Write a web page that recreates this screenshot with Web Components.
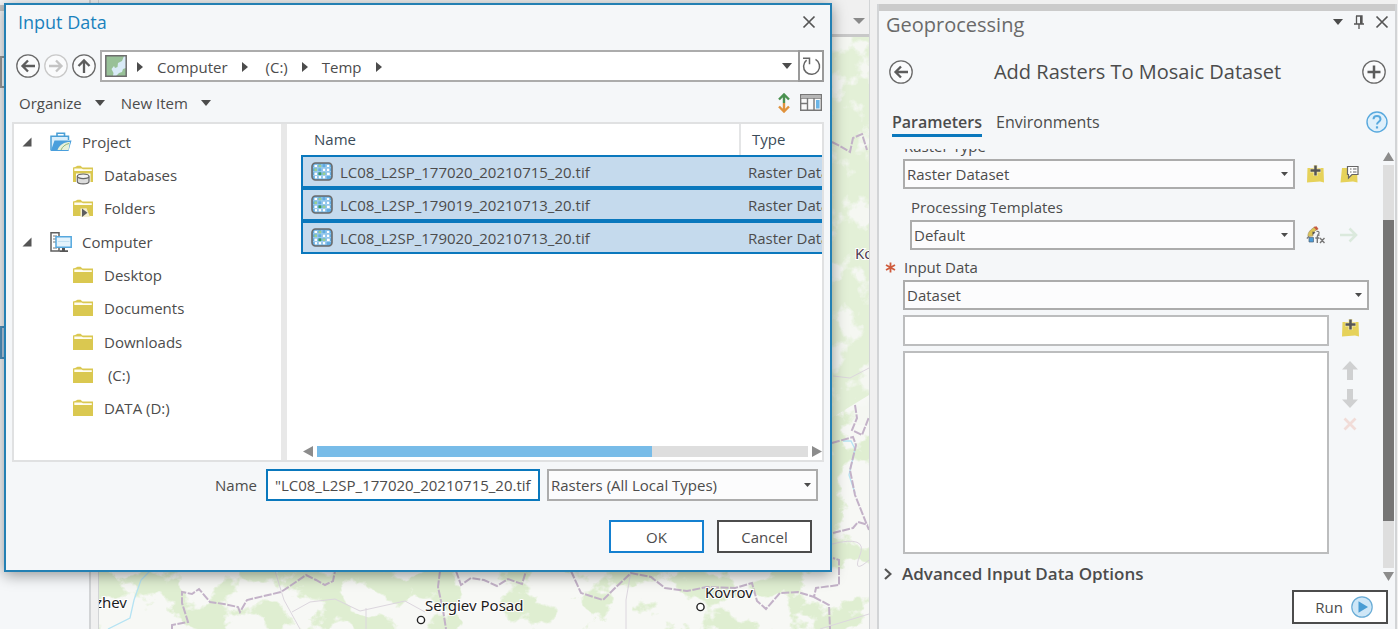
<!DOCTYPE html>
<html lang="en">
<head>
<meta charset="utf-8">
<title>Add Rasters To Mosaic Dataset</title>
<style>
  html, body { height: 100%; }
  body {
    margin: 0; overflow: hidden; background: #f0f0f0; color: #4c4c4c;
    font: 15px/20px "Open Sans", "Noto Sans", sans-serif;
  }
</style>
</head>
<body>
<app-shell></app-shell>

<script>
const ICONS = {
  close: [14, 14, '<path d="M1.500 1.500 12.500 12.500M12.500 1.500 1.500 12.500" stroke="#555" stroke-width="1.700" fill="none"/>'],
  back: [24, 24, '<circle cx="12" cy="12" r="11.200" fill="#fafbfc" stroke="#6a6a6a" stroke-width="1.300"/><path d="M19 12H6.500M12 6.500 6.500 12 12 17.500" fill="none" stroke="#5c5c5c" stroke-width="2.300"/>'],
  forward: [24, 24, '<circle cx="12" cy="12" r="11.200" fill="#fafbfc" stroke="#c9c9c9" stroke-width="1.300"/><path d="M5 12H17.500M12 6.500 17.500 12 12 17.500" fill="none" stroke="#c4c4c4" stroke-width="2.300"/>'],
  up: [24, 24, '<circle cx="12" cy="12" r="11.200" fill="#fafbfc" stroke="#6a6a6a" stroke-width="1.300"/><path d="M12 19V6.500M6.500 12 12 6.500 17.500 12" fill="none" stroke="#5c5c5c" stroke-width="2.300"/>'],
  plus: [24, 24, '<circle cx="12" cy="12" r="11.200" fill="#fafbfc" stroke="#6a6a6a" stroke-width="1.300"/><path d="M5.500 12H18.500M12 5.500V18.500" fill="none" stroke="#5c5c5c" stroke-width="2.500"/>'],
  help: [22, 22, '<circle cx="11" cy="11" r="10" fill="#dff0fb" stroke="#58a9de" stroke-width="1.400"/><path d="M7.500 8.200C7.500 3.800 14.500 3.800 14.500 8.200C14.500 10.800 11 10.700 11 13.600" fill="none" stroke="#58a9de" stroke-width="2"/><path d="M9.900 15.300h2.200v2.200H9.900z" fill="#58a9de"/>'],
  run: [22, 22, '<circle cx="11" cy="11" r="10.200" fill="#cfe7f7" stroke="#69acd6" stroke-width="1.200"/><path d="M7.500 5.200 17 11 7.500 16.800z" fill="#4a9dd4"/>'],
  caret: [10, 6, '<path d="M0 0H10L5 6z" fill="#4c4c4c"/>'],
  caretGrey: [12, 6, '<path d="M0 0H12L6 6z" fill="#8a8a8a"/>'],
  caretSmall: [7, 4, '<path d="M0 0H7L3.500 4z" fill="#4c4c4c"/>'],
  crumb: [6, 10, '<path d="M0 0 6 5 0 10z" fill="#4c4c4c"/>'],
  expanded: [10, 10, '<path d="M9.500 .5V9.500H.5z" fill="#555"/>'],
  chevron: [8, 12, '<path d="M1 1 6.500 6 1 11" fill="none" stroke="#555" stroke-width="2.200"/>'],
  pin: [12, 14, '<path d="M3 1H9V8.500M3.500 1V8.500M1 9H11M6 9V14" fill="none" stroke="#555" stroke-width="1.300"/><path d="M7 1h2v8H7z" fill="#555"/>'],
  refresh: [20, 20, '<path d="M5.600 4.100A8 8 0 1 0 14.500 3.400" fill="none" stroke="#666" stroke-width="1.500"/><path d="M2 2.200H8.500V8.200" fill="none" stroke="#666" stroke-width="1.500"/>'],
  sort: [12, 20, '<path d="M1 6.500 6 1.500 11 6.500M6 2V10" fill="none" stroke="#4a9150" stroke-width="2.400"/><path d="M1 13.500 6 18.500 11 13.500M6 10V18" fill="none" stroke="#e0923c" stroke-width="2.400"/>'],
  details: [22, 17, '<path d="M.7.700H21.300V16.300H.7zM.7 4H21.300M7.500 4V16M14 4V16M.7 9.500H7.500" fill="#fafafa" stroke="#777" stroke-width="1.400"/><path d="M1 1.500H21V4H1z" fill="#b5b5b5"/><path d="M16 6h3.600v8.500H16z" fill="#6cb5e6"/>'],
  mapThumb: [22, 22, '<path d="M1 1H21V21H1z" fill="#d9ebf7"/><path d="M1 1H19L17 6L13 8L12.500 12L10 13L9 11L6.500 14L8.500 18L8 21H1zM21 13V21H11L14 18L17 17L18 14z" fill="#98c198"/><path d="M.8.800H21.200V21.200H.8z" fill="none" stroke="#6d6d6d" stroke-width="1.500"/>'],
  project: [22, 20, '<path d="M7 4V1.200H14.500V4" fill="none" stroke="#4a9fd6" stroke-width="1.600"/><path d="M1 18.500V4.200H18.500V8" fill="#d9eefb" stroke="#4a9fd6" stroke-width="1.500"/><path d="M4.500 8.500H21.500L18.500 19H.8z" fill="#4a9fdc"/><path d="M7.500 18C9.500 12.500 14.500 10 20 10L18.500 18z" fill="#e8f1da"/><path d="M11 18C12.500 14.500 15 12.500 19 11.500" fill="none" stroke="#8fb67c"/>'],
  computer: [22, 20, '<path d="M1 .8H9V19H1z" fill="#fff" stroke="#5f5f5f" stroke-width="1.500"/><path d="M3 4H7M3 7H6M3 10H6M3 16H7" stroke="#777" stroke-width="1.200"/><path d="M6 4.800H21.200V15.200H6z" fill="#e4f3fc" stroke="#56a8de" stroke-width="1.500"/><path d="M8 9.500H19.500" stroke="#c2e0f2"/><path d="M12 16h3v2.200h3V20H9.500v-1.800H12z" fill="#555"/>'],
  folder: [22, 18, '<path d="M1 17V2.600L3.200 2L5.500 .8H8.500L10.500 2.400H21V17z" fill="#dac850"/><path d="M2.300 6V3.400H9.500L11 4.200H19.800V6z" fill="#fffdf2"/>'],
  databases: [22, 20, '<path d="M1 17V2.600L3.200 2L5.500 .8H8.500L10.500 2.400H21V17z" fill="#dac850"/><path d="M2.300 6V3.400H9.500L11 4.200H19.800V6z" fill="#fffdf2"/><path d="M4 8.500H18.500V18H4z" fill="#fff"/><path d="M5.300 11.500V16.500C5.300 19.700 17 19.700 17 16.500V11.500" fill="#dcdcdc" stroke="#666" stroke-width="1.200"/><ellipse cx="11.150" cy="11.300" rx="5.850" ry="2.300" fill="#f3f3f3" stroke="#666" stroke-width="1.200"/>'],
  folders: [22, 18, '<path d="M1 17V2.600L3.200 2L5.500 .8H8.500L10.500 2.400H21V17z" fill="#dac850"/><path d="M2.300 6V3.400H9.500L11 4.200H19.800V6z" fill="#fffdf2"/><path d="M8.500 9.500 14.500 9.200 18 18H8.500z" fill="#f4efd0"/><path d="M10 9.500 15.500 13.700 10 18z" fill="#5e5e5e"/>'],
  raster: [22, 19, '<rect x="1" y="1" width="20" height="17" rx="3.500" fill="#5faae0" stroke="#6b6b6b" stroke-width="1.600"/><path d="M3.400 3.900H6M15.800 3.900h2.600M11.700 7.800h2.600M15.800 7.800h2.600M3.400 11.800H6M15.800 11.800h3M3.800 15.200H6M7.600 15.200h2.600M11.700 15.200h2.600" stroke="#fff" stroke-width="2.400"/><path d="M6.800 2V17M10.900 2V17M15 2V17M2 5.800H20M2 9.700H20M2 13.600H20" stroke="#a9d3f0" stroke-width=".9"/><path d="M7.600 2.700H10.200V5.200H7.600zM3.400 6.600h2.600v2.400H3.400zM11.700 10.600h2.600v2.400h-2.600z" fill="#9bcf8f"/><path d="M7.500 10.400H10.300V13.100H7.500z" fill="#3c9a5b"/>'],
  folderAdd: [19, 18, '<path d="M1.500 3H17.500L18 17.500L14 16.500L1 17.500z" fill="#e6d25a"/><path d="M9.500 0V11M4 5.500H15" stroke="#f3e9b0" stroke-width="4"/><path d="M9.500 .5V10.500M4.500 5.500H14.500" stroke="#555" stroke-width="2.500"/>'],
  folderNote: [19, 18, '<path d="M2 3H17L17.500 17.500L13 16.500L.5 17.500z" fill="#e6d25a"/><path d="M7.500 1.500H18V9.500H12L8.500 13V9.500H7.500z" fill="#fff" stroke="#666" stroke-width="1.200"/><path d="M10 4H11.500M13 4H16.500M10 7H11.500M13 7H16.500" stroke="#666" stroke-width="1.200"/>'],
  editor: [19, 18, '<path d="M2 10.500C1.500 6 5 3.500 8.500 1L11 3.500C8 5 6.500 7.500 7 10z" fill="#dcc455" stroke="#a89868" stroke-width=".7"/><path d="M7.500 1 10.500 .2 12.500 3 10.500 4.200z" fill="#c65a43"/><path d="M6.500 5.500 9.500 6.500 6.500 9z" fill="#555"/><path d="M10.500 5.500C14 4.500 13.500 8.500 11.500 8.500M.8 12.500 3 10.500" fill="none" stroke="#777" stroke-width="1.200"/><path d="M3 11.500H7.500V16H3z" fill="#4a9bd8" stroke="#567" stroke-width=".7"/><path d="M13.500 9.200C11.500 8.700 11.300 10 11.300 12V17M9.300 12H13.300M14 12 18.500 17M18.500 12 14 17" fill="none" stroke="#777" stroke-width="1.400"/>'],
  go: [18, 16, '<path d="M0 8H16M9.500 1.500 16 8 9.500 14.500" fill="none" stroke="#dbe9dd" stroke-width="2.600"/>'],
  moveUp: [16, 19, '<path d="M8 0 16 8.500H11V19H5V8.500H0z" fill="#cfd0d1"/>'],
  moveDown: [16, 19, '<path d="M8 19 16 10.500H11V0H5V10.500H0z" fill="#cfd0d1"/>'],
  remove: [14, 14, '<path d="M1.500 1.500 12.500 12.500M12.500 1.500 1.500 12.500" stroke="#f1dcd8" stroke-width="2.800" fill="none"/>'],
  required: [11, 11, '<path d="M5.500 .5V10.500M1 3 10 8M10 3 1 8" stroke="#cf5b3c" stroke-width="1.800"/>'],
  triUp: [11, 9, '<path d="M5.500 0 11 9H0z" fill="#8c8c8c"/>'],
  triDown: [11, 9, '<path d="M0 0H11L5.500 9z" fill="#8c8c8c"/>'],
  triLeft: [10, 11, '<path d="M10 0V11L0 5.500z" fill="#8c8c8c"/>'],
  triRight: [10, 11, '<path d="M0 0 10 5.500 0 11z" fill="#8c8c8c"/>'],
};

class Base extends HTMLElement {
  connectedCallback() {
    if (this.shadowRoot) return;
    const t = document.createElement('template');
    t.innerHTML = this.view();
    this.attachShadow({ mode: 'open' }).append(t.content.cloneNode(true));
  }
  a(name, fallback = '') { return this.getAttribute(name) ?? fallback; }
}
const RESET = `
  *, *::before, *::after { box-sizing: border-box; }
  button { all: unset; box-sizing: border-box; cursor: default; display: inline-flex; align-items: center; }
  h1, h2, ul, ol { margin: 0; padding: 0; font-weight: 400; list-style: none; }
  input, textarea, select { font: inherit; color: inherit; margin: 0; border-radius: 0; outline: none; }
`;

customElements.define('ui-icon', class extends Base {
  view() {
    const [w, h, body] = ICONS[this.a('name')];
    return `<style>:host{display:inline-flex;flex:none} svg{display:block}</style>
      <svg width="${w}" height="${h}" viewBox="0 0 ${w} ${h}" aria-hidden="true">${body}</svg>`;
  }
});

/* Labelled drop-down; the "actions" slot takes the buttons to its right. */
customElements.define('ui-combo', class extends Base {
  view() {
    return `<style>${RESET}
      :host { display: block; }
      label { display: block; line-height: 24px; padding: 0 0 1px 1px; }
      .row { display: flex; align-items: center; }
      .box { position: relative; flex: 1; min-width: 0; display: flex; }
      select { appearance: none; width: 100%; height: var(--combo-height, 30px); padding: 0 20px 0 2px;
        border: 2px solid #acacac; background: #fcfcfd; }
      ui-icon { position: absolute; right: 7px; top: 50%; margin-top: -2px; pointer-events: none; }
    </style>
    ${this.a('label') ? `<label for="s">${this.a('label')}</label>` : ''}
    <div class="row"><div class="box">
      <select id="s" aria-label="${this.a('label', this.a('name'))}"><option>${this.a('value')}</option></select>
      <ui-icon name="caretSmall"></ui-icon>
    </div><slot name="actions"></slot></div>`;
  }
});

customElements.define('ui-scrollbar', class extends Base {
  view() {
    const v = this.a('axis') === 'y';
    return `<style>
      :host { display: flex; align-items: center; gap: 4px; flex-direction: ${v ? 'column' : 'row'}; }
      .track { flex: 1; display: flex; flex-direction: inherit; align-self: stretch; background: #dedede; }
      .lead { flex: ${this.a('before')} 0 0; } .thumb { flex: ${this.a('thumb')} 0 0; background: ${v ? '#757575' : '#78bce8'}; }
      .trail { flex: ${this.a('after')} 0 0; }
    </style>
    <ui-icon name="${v ? 'triUp' : 'triLeft'}"></ui-icon>
    <div class="track"><div class="lead"></div><div class="thumb"></div><div class="trail"></div></div>
    <ui-icon name="${v ? 'triDown' : 'triRight'}"></ui-icon>`;
  }
});

customElements.define('tree-item', class extends Base {
  view() {
    const root = this.hasAttribute('root');
    return `<style>
      :host { display: flex; align-items: center; padding-left: ${root ? 8 : 58}px; white-space: pre; }
      .toggle { margin-right: 18px; } .icon { margin-right: 10px; }
    </style>
    ${root ? '<ui-icon class="toggle" name="expanded"></ui-icon>' : ''}
    <ui-icon class="icon" name="${this.a('icon')}"></ui-icon><span><slot></slot></span>`;
  }
});

customElements.define('map-view', class extends Base {
  view() {
    return `<style>
      :host { display: block; min-height: 0; overflow: hidden; }
      svg { display: block; width: 100%; height: 100%; }
      .town { font: 15px "Noto Sans", sans-serif; fill: #1c1c1c; stroke: #fff; stroke-width: 2px; paint-order: stroke; }
      .region { font: 15px "Noto Sans", sans-serif; fill: #4d3b52; stroke: #fff; stroke-width: 2px; paint-order: stroke; }
    </style>
    <svg viewBox="99 37 770 592" preserveAspectRatio="xMinYMin slice" role="img" aria-label="Topographic map">
      <defs>
        <filter id="woods" x="0" y="0" width="1" height="1" color-interpolation-filters="sRGB">
          <feTurbulence type="fractalNoise" baseFrequency=".026 .03" numOctaves="5" seed="11"/>
          <feColorMatrix values="0 0 0 0 .875  0 0 0 0 .935  0 0 0 0 .82  14 0 0 0 -7.200"/>
        </filter>
        <filter id="clearings" x="0" y="0" width="1" height="1" color-interpolation-filters="sRGB">
          <feTurbulence type="fractalNoise" baseFrequency=".035" numOctaves="5" seed="4"/>
          <feColorMatrix values="0 0 0 0 .96  0 0 0 0 .97  0 0 0 0 .95  8 0 0 0 -4.200"/>
        </filter>
      </defs>
      <path fill="#f7f8f5" d="M99 37H869V629H99z"/>
      <rect x="99" y="37" width="770" height="592" filter="url(#woods)"/>
      <path fill="#e3f0d7" d="M820 37H869V395L820 425z"/>
      <rect x="820" y="37" width="49" height="388" filter="url(#clearings)"/>
      <g fill="none" stroke="#dcd6de" stroke-width="1">
        <path d="M275 571 284 600 300 629M292 612 310 602 335 599 360 611 405 601 425 612M366 629V608M631 571 626 600V629M833 376 850 378 869 368M832 544Q868 535 860 555T869 560M820 629 869 614"/>
      </g>
      <path d="M108 629 130 618 134 600 141 580 150 571M843 441H851L855 449 849 475 855 493" fill="none" stroke="#b5e3f3" stroke-width="1.300"/>
      <g fill="none" stroke="#c3b2c8" stroke-width="2" stroke-dasharray="8 1.500">
        <path d="M172 629V625L188 622 182 603V592L192 594 199 589 210 602 224 604 238 607 240 612 247 600 281 592 290 586 306 575 316 580 325 585 333 581 335 571"/>
        <path d="M440 571 438 587 443 610 446 629M456 571 461 585 471 578 484 580 497 586 508 579 522 584 526 571"/>
        <path d="M571 571 581 593 603 600 614 589 631 573 651 577 665 588 687 591 707 587 735 588 752 583 757 601 766 609 780 593 798 592 814 597 816 588 839 585V560L833 558M814 597 829 605 830 629"/>
        <path d="M832 443 853 437 856 445 850 470 855 495 869 530M855 405 857 418 852 430 862 435 869 417M833 533 853 528 858 522 868 525M832 142 840 146 850 152 853 138 862 134 867 150"/>
      </g>
      <g fill="#fff" stroke="#222" stroke-width="1.400"><circle cx="421" cy="620" r="3.600"/><circle cx="700.500" cy="607" r="3.600"/></g>
      <text class="town" x="127" y="608" text-anchor="end">zhev</text>
      <text class="town" x="425" y="611">Sergiev Posad</text>
      <text class="town" x="705" y="598">Kovrov</text>
      <text class="region" x="855" y="259">Ko</text>
    </svg>`;
  }
});

customElements.define('browse-dialog', class extends Base {
  view() {
    const files = ['LC08_L2SP_177020_20210715_20.tif', 'LC08_L2SP_179019_20210713_20.tif', 'LC08_L2SP_179020_20210713_20.tif'];
    return `<style>${RESET}
      :host { display: flex; flex-direction: column; box-sizing: border-box; padding: 4px 6px 17px;
        border: 2px solid #2480b3; background: #f5f7f9; box-shadow: 0 3px 14px rgba(0,0,0,.4); }
      header { display: flex; justify-content: space-between; align-items: center; height: 26px; padding: 0 8px 0 6px; }
      h1 { font-size: 18px; line-height: 24px; color: #1a82bd; }
      .nav { display: flex; align-items: center; height: 32px; margin-top: 15px; padding-left: 4px; }
      .nav > button { margin-right: 4px; }
      .path { flex: 1; display: flex; align-items: center; height: 32px; border: 2px solid #acacac; background: #fff; padding-left: 3px; }
      ol { flex: 1; display: flex; align-items: center; margin-left: 10px; padding-top: 2px; }
      li { display: flex; align-items: center; gap: 14px; white-space: pre; }
      li ui-icon { margin-right: 14px; }
      .refresh { width: 26px; height: 32px; margin: 0 -2px 0 6px; justify-content: center; border: 2px solid #9a9a9a; }
      .tools { display: flex; align-items: center; gap: 16px; height: 40px; padding: 1px 2px 0 7px; }
      .tools button { gap: 13px; }
      .tools .right { margin-left: auto; display: flex; align-items: center; gap: 10px; }
      .panes { display: grid; grid-template-columns: 267px 6px minmax(0, 1fr); height: 340px; border: 2px solid #e0e1e2; background: #fff; }
      .tree { display: grid; grid-auto-rows: 1fr; height: 300px; margin-top: 1px; }
      .split { background: #e8e8e8; }
      .list { display: flex; flex-direction: column; min-width: 0; overflow: hidden; }
      table { width: 100%; border-spacing: 0; table-layout: fixed; padding-left: 14px; }
      th { height: 31px; text-align: left; font-weight: 400; color: #3b4b58; padding: 0 13px 1px; }
      th + th { border-left: 2px solid #e4e5e6; padding-left: 11px; }
      td { height: 33px; padding: 0; background: #c5daed; border: solid #0a78bd; border-width: 2px 0; overflow: hidden; white-space: nowrap; }
      td:first-child { border-left-width: 2px; padding-left: 8px; }
      td + td { padding-left: 9px; }
      .file { display: flex; align-items: center; gap: 7px; }
      .list ui-scrollbar { height: 11px; margin: auto 0 3px 16px; }
      .name { display: flex; align-items: center; height: 32px; margin: 7px 6px 0 203px; }
      .name label { margin-right: 9px; }
      .name input { width: 274px; height: 32px; margin-right: 7px; border: 2px solid #0a78bd; background: #fff; padding: 0 0 0 7px; }
      .name ui-combo { flex: 1; --combo-height: 32px; }
      .actions { display: flex; justify-content: flex-end; gap: 13px; margin: 19px 12px 0 0; }
      .actions button { width: 95px; height: 33px; justify-content: center; border: 2px solid #4c4c4c; background: #fff; }
      .actions .ok { border-color: #1480d0; }
    </style>
    <header><h1>Input Data</h1><button aria-label="Close"><ui-icon name="close"></ui-icon></button></header>
    <div class="nav">
      <button aria-label="Back"><ui-icon name="back"></ui-icon></button>
      <button aria-label="Forward"><ui-icon name="forward"></ui-icon></button>
      <button aria-label="Up"><ui-icon name="up"></ui-icon></button>
      <div class="path"><ui-icon name="mapThumb"></ui-icon>
        <ol><li><ui-icon name="crumb"></ui-icon></li>
          <li>Computer<ui-icon name="crumb"></ui-icon></li>
          <li> (C:)<ui-icon name="crumb"></ui-icon></li>
          <li>Temp<ui-icon name="crumb"></ui-icon></li></ol>
        <button aria-label="Recent locations"><ui-icon name="caret"></ui-icon></button>
        <button class="refresh" aria-label="Refresh"><ui-icon name="refresh"></ui-icon></button>
      </div>
    </div>
    <div class="tools">
      <button>Organize<ui-icon name="caret"></ui-icon></button>
      <button>New Item<ui-icon name="caret"></ui-icon></button>
      <div class="right"><button aria-label="Sort"><ui-icon name="sort"></ui-icon></button>
        <button aria-label="View"><ui-icon name="details"></ui-icon></button></div>
    </div>
    <div class="panes">
      <div><div class="tree">
        <tree-item root icon="project">Project</tree-item>
        <tree-item icon="databases">Databases</tree-item>
        <tree-item icon="folders">Folders</tree-item>
        <tree-item root icon="computer">Computer</tree-item>
        <tree-item icon="folder">Desktop</tree-item>
        <tree-item icon="folder">Documents</tree-item>
        <tree-item icon="folder">Downloads</tree-item>
        <tree-item icon="folder"> (C:)</tree-item>
        <tree-item icon="folder">DATA (D:)</tree-item>
      </div></div>
      <div class="split"></div>
      <div class="list">
        <table>
          <colgroup><col><col style="width:83px"></colgroup>
          <thead><tr><th>Name</th><th>Type</th></tr></thead>
          <tbody>${files.map(f => `<tr><td><div class="file"><ui-icon name="raster"></ui-icon>${f}</div></td><td>Raster Dataset</td></tr>`).join('')}</tbody>
        </table>
        <ui-scrollbar axis="x" before="0" thumb="336" after="157"></ui-scrollbar>
      </div>
    </div>
    <div class="name"><label for="n">Name</label><input id="n" value='"LC08_L2SP_177020_20210715_20.tif'>
      <ui-combo name="File type" value="Rasters (All Local Types)"></ui-combo></div>
    <div class="actions"><button class="ok">OK</button><button>Cancel</button></div>`;
  }
});

customElements.define('geo-pane', class extends Base {
  view() {
    return `<style>${RESET}
      :host { display: flex; flex-direction: column; box-sizing: border-box; background: #f5f7f9;
        border: solid #d2d4d6; border-width: 0 2px; }
      .grip { height: 7px; background: #cbcbcb; flex: none; }
      .bar { display: flex; align-items: center; height: 28px; padding: 0 6px 0 7px; }
      .bar h1 { flex: 1; font-size: 20px; line-height: 26px; color: #6a6a6a; }
      .bar div { display: flex; align-items: center; gap: 10px; margin-bottom: 6px; }
      .head { display: flex; align-items: center; height: 32px; margin: 17px 9px 0 10px; }
      .head h2 { flex: 1; text-align: center; font-size: 20px; line-height: 26px; }
      .tabs { display: flex; align-items: center; gap: 14px; height: 30px; margin: 19px 7px 0 13px; }
      .tabs button { height: 30px; padding-top: 2px; border-bottom: 3px solid transparent; font-size: 16px; line-height: 22px; }
      .tabs .on { font-weight: 600; border-color: #0a78bd; }
      .tabs .help { margin-left: auto; padding: 0; border: 0; }
      .body { flex: 1; min-height: 0; display: flex; margin-top: 12px; }
      .form { flex: 1; min-width: 0; overflow: hidden; padding-left: 5px; }
      .fields { margin: -15px 14px 0 19px; }
      .side { display: flex; align-items: center; gap: 15px; margin-left: 11px; width: 63px; }
      .templates { margin: 6px 0 5px 7px; }
      .input-data { position: relative; }
      .req { position: absolute; left: -18px; top: 7px; }
      .entry { display: flex; margin-top: 5px; }
      .entry input, .entry textarea { flex: 1; min-width: 0; border: 2px solid #bcbdbe; background: #fff; padding: 0 4px; }
      .entry input { height: 31px; }
      .entry textarea { height: 203px; resize: none; }
      .entry .col { width: 40px; display: flex; flex-direction: column; align-items: center; gap: 9px; padding: 4px 0 0 2px; }
      .entry .order { padding-top: 10px; }
      .more { font-weight: 600; font-size: 17px; line-height: 22px; gap: 10px; margin-top: 9px; }
      ui-scrollbar { width: 11px; margin: 3px 1px 2px 0; }
      footer { flex: none; display: flex; justify-content: flex-end; padding: 7px 7px 5px 0; }
      footer button { width: 96px; height: 34px; justify-content: center; gap: 8px; padding-left: 8px; border: 2px solid #4c4c4c; background: #fff; }
    </style>
    <div class="grip"></div>
    <div class="bar"><h1>Geoprocessing</h1><div>
      <button aria-label="Options"><ui-icon name="caret"></ui-icon></button>
      <button aria-label="Auto hide"><ui-icon name="pin"></ui-icon></button>
      <button aria-label="Close"><ui-icon name="close"></ui-icon></button></div></div>
    <div class="head"><button aria-label="Back"><ui-icon name="back"></ui-icon></button>
      <h2>Add Rasters To Mosaic Dataset</h2>
      <button aria-label="Add"><ui-icon name="plus"></ui-icon></button></div>
    <div class="tabs"><button class="on">Parameters</button><button>Environments</button>
      <button class="help" aria-label="Help"><ui-icon name="help"></ui-icon></button></div>
    <div class="body">
      <div class="form">
        <div class="fields">
          <ui-combo label="Raster Type" value="Raster Dataset"><div class="side" slot="actions">
            <button aria-label="Add raster type"><ui-icon name="folderAdd"></ui-icon></button>
            <button aria-label="Raster type properties"><ui-icon name="folderNote"></ui-icon></button></div></ui-combo>
          <ui-combo class="templates" label="Processing Templates" value="Default"><div class="side" slot="actions">
            <button aria-label="Edit template"><ui-icon name="editor"></ui-icon></button>
            <button aria-label="Apply"><ui-icon name="go"></ui-icon></button></div></ui-combo>
          <div class="input-data"><ui-icon class="req" name="required"></ui-icon>
            <ui-combo label="Input Data" value="Dataset"></ui-combo></div>
          <div class="entry"><input aria-label="Dataset path"><div class="col">
            <button aria-label="Browse"><ui-icon name="folderAdd"></ui-icon></button></div></div>
          <div class="entry"><textarea aria-label="Datasets"></textarea><div class="col order">
            <button aria-label="Move up"><ui-icon name="moveUp"></ui-icon></button>
            <button aria-label="Move down"><ui-icon name="moveDown"></ui-icon></button>
            <button aria-label="Remove"><ui-icon name="remove"></ui-icon></button></div></div>
        </div>
        <button class="more"><ui-icon name="chevron"></ui-icon>Advanced Input Data Options</button>
      </div>
      <ui-scrollbar axis="y" before="55" thumb="302" after="47"></ui-scrollbar>
    </div>
    <footer><button>Run<ui-icon name="run"></ui-icon></button></footer>`;
  }
});

customElements.define('app-shell', class extends Base {
  view() {
    return `<style>${RESET}
      :host { display: flex; height: 100vh; background: #f0f0f0; }
      .work { flex: 1; min-width: 0; position: relative; display: flex; }
      .contents { width: 91px; background: #f5f7f9; border-right: 2px solid #d2d4d6; }
      .contents .band { height: 6px; margin-top: 5px; background: #c6c6c6; }
      .contents .search { height: 32px; margin-top: 45px; border: 2px solid #9c9c9c; background: #fff; }
      .contents .layer { height: 33px; margin-top: 238px; background: #b8cfe6; border: 2px solid #4e93c2; }
      .view { flex: 1; min-width: 0; display: flex; flex-direction: column; margin: 0 7px; border: solid #d2d4d6; border-width: 0 1px; }
      .tabbar { height: 37px; flex: none; display: flex; align-items: flex-start; justify-content: flex-end; padding: 18px 4px 0; border-bottom: 3px solid #c8c8c8; background: #f0f0f0; }
      map-view { flex: 1; }
      browse-dialog { position: absolute; left: 4px; right: 45px; top: 3px; }
      geo-pane { width: 520px; margin: 4px 1px 0 0; }
    </style>
    <div class="work">
      <div class="contents"><div class="band"></div><div class="search"></div><div class="layer"></div></div>
      <div class="view"><div class="tabbar"><button aria-label="Open views"><ui-icon name="caretGrey"></ui-icon></button></div>
        <map-view></map-view></div>
      <browse-dialog></browse-dialog>
    </div>
    <geo-pane></geo-pane>`;
  }
});
</script>
</body>
</html>
